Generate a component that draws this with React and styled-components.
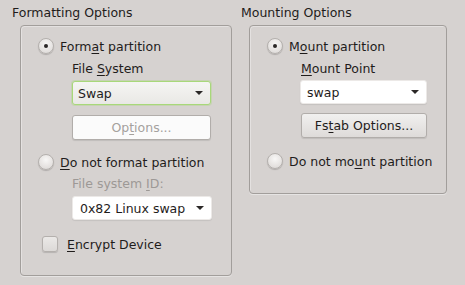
import { createGlobalStyle } from "styled-components";
import styled from "styled-components";

const GlobalStyle = createGlobalStyle`
  html, body {
    margin: 0;
    padding: 0;
    background: #d6d2d0;
  }
  body {
    font-family: "DejaVu Sans", "Noto Sans", sans-serif;
    font-size: 12.5px;
    color: #1f1c1b;
  }
`;

const Page = styled.div`
  display: flex;
  align-items: flex-start;
  gap: 9px;
  padding: 5px 0 0 12px;
  width: 465px;
  height: 285px;
  box-sizing: border-box;
`;

const Group = styled.div`
  display: flex;
  flex-direction: column;
`;

const GroupTitle = styled.div`
  height: 16px;
  line-height: 16px;
  margin-bottom: 4px;
  white-space: nowrap;
`;

const Frame = styled.div`
  margin-left: 8px;
  width: ${(p) => p.$w}px;
  height: ${(p) => p.$h}px;
  box-sizing: border-box;
  border: 1px solid #a29e9b;
  border-radius: 4px;
  box-shadow: inset 1px 1px 0 rgba(255, 255, 255, 0.35), 0 1px 0 rgba(255, 255, 255, 0.4);
  padding: 12px 0 0 17px;
  display: flex;
  flex-direction: column;
  align-items: flex-start;
`;

const OptionRow = styled.label`
  display: flex;
  align-items: center;
  height: 16px;
  margin-top: ${(p) => p.$top || 0}px;
  margin-left: ${(p) => p.$indent || 0}px;
  white-space: nowrap;
`;

const Radio = styled.span`
  width: 16px;
  height: 16px;
  box-sizing: border-box;
  border-radius: 50%;
  border: 1px solid #b4b0ad;
  background: radial-gradient(circle at 50% 35%, #f8f7f6 0%, #e6e3e1 60%, #d8d5d3 100%);
  box-shadow: 0 1px 1px rgba(0, 0, 0, 0.18);
  display: flex;
  align-items: center;
  justify-content: center;
  margin-right: 6px;
  flex: none;

  &::after {
    content: "";
    width: 4px;
    height: 4px;
    border-radius: 50%;
    background: ${(p) => (p.$checked ? "#2b2827" : "transparent")};
  }
`;

const Checkbox = styled.span`
  width: 16px;
  height: 16px;
  box-sizing: border-box;
  border-radius: 3px;
  border: 1px solid #b4b0ad;
  background: linear-gradient(#ebe9e7, #dcd9d7);
  box-shadow: 0 1px 1px rgba(0, 0, 0, 0.15);
  margin-right: 9px;
  flex: none;
`;

const FieldLabel = styled.div`
  height: 16px;
  line-height: 16px;
  margin-top: ${(p) => p.$top}px;
  margin-left: 34px;
  color: ${(p) => (p.$disabled ? "#9d9996" : "inherit")};
  white-space: nowrap;
`;

const Combo = styled.div`
  display: flex;
  align-items: center;
  justify-content: space-between;
  box-sizing: border-box;
  width: ${(p) => p.$w}px;
  height: 24px;
  margin-top: ${(p) => p.$top}px;
  margin-left: ${(p) => p.$indent}px;
  padding: 0 7px 0 ${(p) => p.$pl || 7}px;
  border-radius: 3px;
  border: 1px solid ${(p) => (p.$focus ? "#a8d87a" : "#ece9e7")};
  background: ${(p) =>
    p.$focus ? "linear-gradient(#f5f5f3, #e9e8e5)" : "#ffffff"};
  box-shadow: ${(p) =>
    p.$focus ? "0 0 0 1px rgba(168, 216, 122, 0.35)" : "0 1px 1px rgba(0,0,0,0.08)"};
  white-space: nowrap;
`;

const Arrow = styled.span`
  width: 0;
  height: 0;
  border-left: 4px solid transparent;
  border-right: 4px solid transparent;
  border-top: 4px solid #2b2827;
`;

const Button = styled.div`
  display: flex;
  align-items: center;
  justify-content: center;
  box-sizing: border-box;
  width: ${(p) => p.$w}px;
  height: 25px;
  margin-top: ${(p) => p.$top}px;
  margin-left: 34px;
  border-radius: 3px;
  border: 1px solid #b1adaa;
  background: ${(p) =>
    p.$disabled ? "#fbfbfb" : "linear-gradient(#f1f0ef, #dedbd9)"};
  color: ${(p) => (p.$disabled ? "#a5a19e" : "inherit")};
  box-shadow: 0 1px 1px rgba(0, 0, 0, 0.1);
  white-space: nowrap;
`;

const U = styled.span`
  text-decoration: underline;
  text-underline-offset: 2px;
`;

export default function App() {
  return (
    <>
      <GlobalStyle />
      <Page>
        <Group>
          <GroupTitle>Formatting Options</GroupTitle>
          <Frame $w={212} $h={251}>
            <OptionRow>
              <Radio $checked />
              <span>
                Form<U>a</U>t partition
              </span>
            </OptionRow>
            <FieldLabel $top={7}>
              File <U>S</U>ystem
            </FieldLabel>
            <Combo $w={139} $top={4} $indent={34} $focus $pl={5}>
              <span>Swap</span>
              <Arrow />
            </Combo>
            <Button $w={139} $top={10} $disabled>
              Op<U>t</U>ions...
            </Button>
            <OptionRow $top={14}>
              <Radio />
              <span>
                <U>D</U>o not format partition
              </span>
            </OptionRow>
            <FieldLabel $top={6} $disabled>
              File system <U>I</U>D:
            </FieldLabel>
            <Combo $w={140} $top={4} $indent={34}>
              <span>0x82 Linux swap</span>
              <Arrow />
            </Combo>
            <OptionRow $top={16} $indent={4}>
              <Checkbox />
              <span>
                <U>E</U>ncrypt Device
              </span>
            </OptionRow>
          </Frame>
        </Group>
        <Group>
          <GroupTitle>Mounting Options</GroupTitle>
          <Frame $w={198} $h={169}>
            <OptionRow>
              <Radio $checked />
              <span>
                M<U>o</U>unt partition
              </span>
            </OptionRow>
            <FieldLabel $top={7}>
              <U>M</U>ount Point
            </FieldLabel>
            <Combo $w={127} $top={3} $indent={33} $pl={6}>
              <span>swap</span>
              <Arrow />
            </Combo>
            <Button $w={126} $top={9}>
              Fs<U>t</U>ab Options...
            </Button>
            <OptionRow $top={15}>
              <Radio />
              <span>
                Do not mo<U>u</U>nt partition
              </span>
            </OptionRow>
          </Frame>
        </Group>
      </Page>
    </>
  );
}
